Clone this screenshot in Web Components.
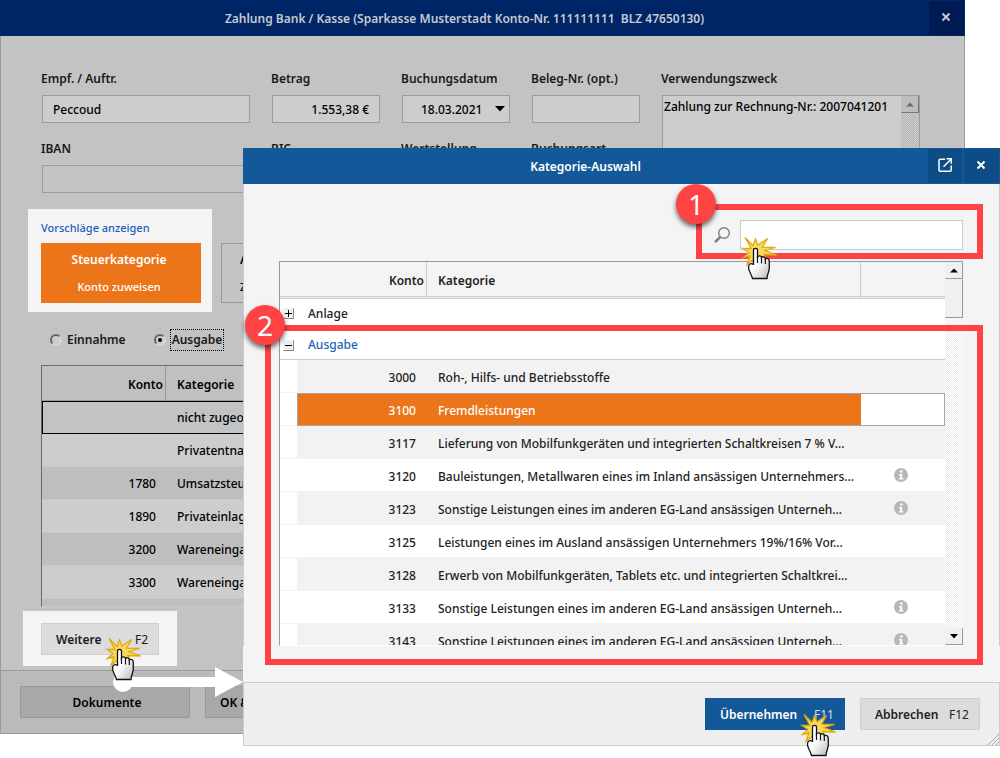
<!DOCTYPE html>
<html lang="de">
<head>
<meta charset="utf-8">
<title>Zahlung Bank / Kasse</title>
<style>
  body { margin: 0; background: #fff; font: 500 12px/20px "Noto Sans", "Open Sans", sans-serif; color: #222; }
</style>
</head>
<body>
<payment-desk></payment-desk>

<script>
/* Shared by every shadow root */
const base = `
  *, *::before, *::after { box-sizing: border-box; }
  button, input, textarea { font: inherit; color: inherit; margin: 0; border-radius: 0; }
`;

function define(name, css, html) {
  customElements.define(name, class extends HTMLElement {
    connectedCallback() {
      if (this.shadowRoot) return;
      const root = this.attachShadow({ mode: 'open' });
      const markup = typeof html === 'function' ? html(this) : html;
      root.innerHTML = `<style>${base}${css}</style>${markup}`;
    }
  });
}

/* Window frame: title bar, body and footer */
define('app-window', `
  :host { display: block; background: var(--body); }
  header { display: flex; height: 36px; background: var(--bar); color: var(--bar-text); font-weight: 600; }
  h1 { flex: 1; margin: 0; font: inherit; line-height: 37px; text-align: center; white-space: pre; }
  button { width: 36px; height: 35px; margin-top: 1px; padding: 0 1px 2px 0; border: 0; border-right: 2px solid var(--bar); border-bottom: 1px solid var(--bar);
    background: var(--bar-button); color: inherit; display: grid; place-items: center; }
  button:last-child { border-right-width: 1px; }
  main { border: 1px solid var(--edge); border-top: 0; border-bottom: 0; }
  footer { display: flex; gap: 15px; padding: 15px 19px; border: 1px solid var(--edge); background: var(--foot); }
`, el => `
  <header><h1>${el.getAttribute('heading')}</h1>
    ${el.hasAttribute('popout') ? `<button aria-label="In neuem Fenster"><svg width="16" height="16" viewBox="0 0 16 16" fill="none" stroke="currentColor" stroke-width="1.5"><path d="M8 2.2H3.2Q2 2.2 2 3.4V13q0 1.2 1.2 1.2H13q1.200 0 1.200-1.200V8.500M6.500 9.700 13.500 2.700M9.500 1.800H14.300V6.700"/></svg></button>` : ''}
    <button aria-label="Schließen"><svg width="12" height="12" viewBox="0 0 12 12" stroke="currentColor" stroke-width="2"><path d="M2.500 2.500 9.500 9.500M9.500 2.500 2.500 9.500"/></svg></button>
  </header>
  <main><slot></slot></main>
  <footer><slot name="footer"></slot></footer>
`);

/* Labelled form control */
define('form-field', `
  :host { display: block; }
  label { display: block; padding-top: 1px; margin-bottom: 6px; font-weight: 600; white-space: nowrap; }
  .box { display: flex; align-items: center; height: 28px; margin: 0 1px; border: 1px solid #9b9b9b; background: #cdcdcd; color: #000; }
  .tall { height: 98px; align-items: stretch; }
  .off { background: #c2c3c5; }
  input { flex: 1; min-width: 0; width: 0; height: 100%; padding: 0 10px; border: 0; background: none; }
  .end input { text-align: right; }
  .date input { padding: 0 0 0 18px; }
  .date svg { margin-right: 4px; }
  textarea { flex: 1; min-width: 0; padding: 1px; border: 0; background: none; resize: none; overflow: hidden; white-space: pre; }
`, el => {
  const kind = el.getAttribute('kind') || '', value = el.getAttribute('value') || '';
  const control = kind === 'tall'
    ? `<textarea id="c">${value}</textarea><scroll-rail dim></scroll-rail>`
    : `<input id="c" value="${value}">` + (kind === 'date' ? '<svg width="10" height="6"><path d="M0 0H10L5 5.500Z"/></svg>' : '');
  return `<label for="c">${el.getAttribute('label')}</label><div class="box ${kind}">${control}</div>`;
});

/* Classic scroll bar */
define('scroll-rail', `
  :host { display: flex; flex-direction: column; width: 18px; color: #000; --face: #f0f0f0; --lo: #999;
    background: repeating-conic-gradient(#fff 0 25%, #ededed 0 50%) 0 0 / 2px 2px; }
  :host([dim]) { color: #6d6d6d; --face: #bdbdbd; --lo: #777;
    background: repeating-conic-gradient(#cacaca 0 25%, #b8b8b8 0 50%) 0 0 / 2px 2px; }
  button { display: grid; place-items: center; height: 17px; padding: 0; background: var(--face);
    border: 1px solid var(--face); border-right-color: var(--lo); border-bottom-color: var(--lo); }
  .thumb { height: 39px; background: var(--face); border: 1px solid var(--face); border-right-color: var(--lo); border-bottom-color: var(--lo); }
  .space { flex: 1; }
`, el => `
  <button aria-label="Nach oben"><svg width="8" height="5" fill="currentColor"><path d="M0 4.500H8L4 .5Z"/></svg></button>
  ${el.hasAttribute('dim') ? '' : '<div class="thumb"></div>'}
  <div class="space"></div>
  ${el.hasAttribute('dim') ? '' : '<button aria-label="Nach unten"><svg width="8" height="5" fill="currentColor"><path d="M0 0H8L4 4.500Z"/></svg></button>'}
`);

/* Push button with optional function key */
define('key-button', `
  :host { display: block; position: relative; }
  button { display: flex; justify-content: center; align-items: center; width: 100%; height: 32px; padding: 1px 10px 0 14px;
    border: 1px solid #cfcfcf; background: #dcdcdc; font-weight: 600; white-space: nowrap; overflow: hidden; }
  button.keyed { justify-content: space-between; }
  kbd { font: inherit; font-weight: 400; }
  :host([tone=primary]) button { background: #135899; border-color: #135899; color: #fff; }
  :host([tone=primary]) kbd { color: #cfdeeb; }
  :host([tone=dim]) button { background: #a8a8a8; border-color: #999; color: #000; }
  :host([cut]) button { justify-content: flex-start; }
`, el => `<button class="${el.getAttribute('key') ? 'keyed' : ''}"><span><slot></slot></span>${el.getAttribute('key') ? `<kbd>${el.getAttribute('key')}</kbd>` : ''}</button><slot name="over"></slot>`);

/* Two-line suggestion tile */
define('suggest-tile', `
  :host { display: block; }
  button { display: flex; flex-direction: column; justify-content: center; gap: 7px; width: 100%; height: 60px; padding: 0 0 0 18px;
    border: 1px solid #999; background: #c4c4c4; color: #000; text-align: left; line-height: 20px; }
  strong { font-weight: 600; }
  :host([active]) button { padding: 0 4px 0 0; align-items: center; background: #ec751a; border-color: #ec751a; color: #fff; }
  span { font-size: 11px; }
`, '<button><strong><slot></slot></strong><span><slot name="sub"></slot></span></button>');

/* Radio pair */
define('booking-kind', `
  :host { display: flex; gap: 28px; padding-left: 9px; font-weight: 600; line-height: 20px; }
  div { display: flex; align-items: center; gap: 5px; }
  input { appearance: none; width: 12px; height: 12px; border-radius: 50%; background: #cdcdcd; display: grid; place-items: center;
    border: 2px solid; border-color: #666 #d6d6d6 #d6d6d6 #666; }
  input:checked::before { content: ""; width: 4px; height: 4px; border-radius: 50%; background: #000; }
  .focus { outline: 1px dotted #000; padding: 0 1px; }
`, `
  <div><input type="radio" name="k" id="in"><label for="in">Einnahme</label></div>
  <div><input type="radio" name="k" id="out" checked><label for="out" class="focus">Ausgabe</label></div>
`);

/* Short table of proposed accounts */
const proposals = [['', 'nicht zugeordnet'], ['', 'Privatentnahmen'], ['1780', 'Umsatzsteuer'], ['1890', 'Privateinlagen'], ['3200', 'Wareneingang'], ['3300', 'Wareneingang'], ['', '']];
define('proposal-table', `
  :host { display: block; height: 242px; overflow: hidden; border: 1px solid #c9c9c9; border-top-color: #6b6b6b; border-left-color: #6b6b6b; color: #000; }
  table { width: 100%; table-layout: fixed; border-collapse: separate; border-spacing: 0; }
  th, td { padding: 1px 11px 0; text-align: left; font-weight: 500; overflow: hidden; white-space: nowrap; }
  th { height: 35px; padding-top: 3px; font-weight: 600; border-bottom: 1px solid #999; background: #c0c0c0; }
  th:first-child { width: 124px; padding-right: 2px; text-align: right; border-right: 1px solid #999; }
  td { height: 33px; background: #cdcdcd; border-bottom: 1px solid #c8c8c8; }
  td:first-child { text-align: right; padding-right: 10px; }
  tbody tr:nth-child(odd) td { background: #bebebe; }
  tbody tr:first-child td { background: #c2c3c5; border: 1px solid #000; border-width: 1px 0; }
  tbody tr:first-child td:first-child { border-left-width: 1px; }
`, `<table><thead><tr><th>Konto</th><th>Kategorie</th></tr></thead><tbody>${
  proposals.map(([n, t]) => `<tr><td>${n}</td><td>${t}</td></tr>`).join('')}</tbody></table>`);

/* Category tree table */
const accounts = [
  ['3000', 'Roh-, Hilfs- und Betriebsstoffe'],
  ['3100', 'Fremdleistungen', 0, 1],
  ['3117', 'Lieferung von Mobilfunkgeräten und integrierten Schaltkreisen 7 % V...'],
  ['3120', 'Bauleistungen, Metallwaren eines im Inland ansässigen Unternehmers...', 1],
  ['3123', 'Sonstige Leistungen eines im anderen EG-Land ansässigen Unterneh...', 1],
  ['3125', 'Leistungen eines im Ausland ansässigen Unternehmers 19%/16% Vor...'],
  ['3128', 'Erwerb von Mobilfunkgeräten, Tablets etc. und integrierten Schaltkrei...'],
  ['3133', 'Sonstige Leistungen eines im anderen EG-Land ansässigen Unterneh...', 1],
  ['3143', 'Sonstige Leistungen eines im anderen EG-Land ansässigen Unterneh...', 1]];
const info = '<svg width="14" height="14" viewBox="0 0 14 14" role="img" aria-label="Info"><circle cx="7" cy="7" r="7" fill="#b7b7b7"/><circle cx="7.300" cy="3.500" r="1.300" fill="#fff"/><path d="M5 6H8.200V10.200H9.400V11.500H4.900V10.200H6.100V7.200H5Z" fill="#fff"/></svg>';
define('category-table', `
  :host { display: block; position: relative; margin: 2px 36px 36px 35px; }
  .view { display: flex; height: 385px; overflow: hidden; border: 1px solid #999; border-right: 0; border-bottom-color: #fff; }
  .rows { flex: 1; min-width: 0; background: #fff; }
  scroll-rail { flex: none; }
  table { width: 100%; table-layout: fixed; border-collapse: separate; border-spacing: 0; }
  th, td { padding: 3px 11px 0; text-align: left; font-weight: 500; white-space: nowrap; }
  th { height: 37px; font-weight: 600; background: #f4f4f4; border-bottom: 3px double #ccc; }
  th.n { width: 130px; padding-right: 2px; text-align: right; border-right: 1px solid #ccc; }
  th.t { border-right: 1px solid #ccc; }
  th.tree { width: 17px; padding: 0; }
  th.i { width: 84px; }
  .group td { padding: 0 0 0 3px; }
  .group.closed td { height: 29px; }
  .group.open td { height: 32px; padding-top: 3px; border-bottom: 1px solid #ccc; color: #1c5fb8; }
  .group div { display: flex; align-items: center; gap: 14px; }
  .group button { width: 11px; height: 11px; padding: 0; display: grid; place-items: center; background: #f0f0f0; border: 1px solid #f0f0f0; border-right-color: #888; border-bottom-color: #888; }
  .item td { height: 33px; border-bottom: 1px solid #f4f4f4; }
  .item td.n { text-align: right; padding-right: 11px; }
  .item td.i { padding: 0 5px 0 0; }
  .item td.i svg { display: block; margin: 0 auto; }
  .item.odd td:not(.tree) { background: #f2f2f2; }
  .item.sel td:not(.tree) { background: #ec751a; color: #fff; border: 1px solid #a5a5a5; border-width: 1px 0; }
  .item.sel td.n { border-left-width: 1px; }
  .item.sel td.i { background: #fff; border-right-width: 1px; }
  mark-frame { position: absolute; top: 64px; right: -20px; bottom: -19px; left: -14px; pointer-events: none; }
`, `
  <div class="view"><div class="rows"><table>
    <thead><tr><th class="tree"></th><th class="n">Konto</th><th class="t">Kategorie</th><th class="i"></th></tr></thead>
    <tbody>
      <tr class="group closed"><td colspan="4"><div><button aria-label="Öffnen"><svg width="7" height="7" stroke="#000"><path d="M0 3.500H7M3.500 0V7"/></svg></button>Anlage</div></td></tr>
      <tr class="group open"><td colspan="4"><div><button aria-label="Schließen"><svg width="7" height="7" stroke="#000"><path d="M0 3.500H7"/></svg></button>Ausgabe</div></td></tr>
      ${accounts.map(([n, t, i, s], k) => `<tr class="item ${s ? 'sel' : k % 2 ? '' : 'odd'}"><td class="tree"></td><td class="n">${n}</td><td class="t">${t}</td><td class="i">${i ? info : ''}</td></tr>`).join('')}
    </tbody></table></div><scroll-rail></scroll-rail></div>
  <mark-frame number="2"></mark-frame>
`);

/* Red frame with a numbered badge on its corner */
define('mark-frame', `
  :host { display: block; position: relative; border: 6px solid #ff4344; }
  b { position: absolute; left: -26px; top: -26px; width: 40px; height: 40px; border-radius: 50%; background: #ff4344; color: #fff;
    font-size: 28px; font-weight: 400; line-height: 41px; text-align: center; box-shadow: 0 3px 5px rgba(0,0,0,.6); }
`, el => `<slot></slot><b>${el.getAttribute('number')}</b>`);

/* Search row */
define('category-search', `
  :host { display: flex; justify-content: flex-end; padding: 20px 16px 0 0; position: relative; z-index: 2; }
  .row { display: flex; align-items: center; gap: 10px; padding: 10px 14px 3px 12px; }
  input { width: 223px; height: 30px; padding: 0 10px; border: 1px solid #ccc; background: #fff; }
  click-hand { position: absolute; left: 34px; top: 20px; }
`, `
  <mark-frame number="1"><div class="row">
    <svg width="16" height="16" viewBox="0 0 16 16" fill="none" stroke="#808080"><circle cx="10" cy="6" r="5.300" stroke-width="1.400"/><path d="M6.200 10 1 15.200" stroke-width="2.600"/></svg>
    <input type="search" aria-label="Kategorie suchen">
  </div><click-hand></click-hand></mark-frame>
`);

/* Pointing hand with click burst */
define('click-hand', `
  :host { display: block; width: 44px; height: 52px; pointer-events: none; }
  svg { display: block; }
`, `
  <svg width="44" height="52" viewBox="0 0 44 52">
    <defs><linearGradient id="g" x1="0" y1="0" x2="1" y2="1"><stop offset=".45" stop-color="#fff"/><stop offset="1" stop-color="#bbb"/></linearGradient></defs>
    <path d="M9 7.500 17 15.500 19.500 9 22 15 31.500 8.500 26.500 17.200 39.500 17.500 29 20.500 40.500 25 28 24.500 30 29 20 27 11 34.500 14 26 7.500 27.500 13 22.500 7 18.500 15 18.500Z" fill="#f9d95d" stroke="#e3a90c" stroke-width="1.300" stroke-linejoin="miter"/>
    <path d="M17.500 35V20.200C17.500 17.800 21.500 17.800 21.500 20.200V27C22.500 25.200 25.300 25.500 25.500 27.500 26.500 26.200 29 26.500 29.300 28.700 31.500 27.700 33.300 29 33.300 31.500V38C33.300 42 31 44 31 48.500H16.500C15.500 44 12.700 42 12.500 37.500 12.300 34 15 32.500 17.500 34.500Z" fill="url(#g)" stroke="#111" stroke-width="1.300"/>
    <path d="M21.500 26V33M25.500 27V33.500M29.300 28.500V34" stroke="#111" stroke-width="1.200"/>
  </svg>
`);

/* Arrow from the button to the dialog */
define('flow-arrow', `:host { display: block; } svg { display: block; }`,
  '<svg width="130" height="30" fill="#fff"><circle cx="10" cy="15" r="10"/><path d="M10 10H102V0L130 15 102 30V20H10Z"/></svg>');

/* Bright panel that stands out of the dimmed window */
define('spot-light', `:host { display: block; position: relative; z-index: 1; background: #f4f4f4; }`, '<slot></slot>');

/* The two windows */
define('payment-desk', `
  :host { display: block; position: relative; min-height: 757px; overflow: hidden; }
  .payment { position: absolute; left: 0; right: 35px; top: 0; z-index: 0; color: #1a1a1a;
    --bar: #002566; --bar-text: #c6c9ce; --bar-button: #001a53; --body: #c3c3c3; --foot: #bababa; --edge: #9a9a9a; }
  .dialog { position: absolute; left: 243px; right: 0; top: 148px; z-index: 1;
    --bar: #135899; --bar-text: #fff; --bar-button: #0d4c86; --body: #f4f4f4; --foot: #eee; --edge: #ccc; }
  .content { padding: 32px 43px 4px 40px; }
  .fields { display: grid; grid-template-columns: 210px 110px 110px 110px 1fr; gap: 15px 20px; }
  .fields .wide { grid-row: span 2; }
  .suggest { display: flex; align-items: flex-end; margin-top: 16px; }
  .suggest spot-light { width: 184px; margin-left: -13px; padding: 9px 11px 9px 13px; }
  .suggest > suggest-tile { flex: 0 1 160px; margin: 0 0 9px 9px; }
  a { display: block; margin-bottom: 5px; color: #1c5fb8; font-size: 11px; text-decoration: none; }
  booking-kind { margin-top: 18px; }
  proposal-table { margin-top: 15px; }
  .more { width: 154px; margin: 4px 0 0 -18px; padding: 12px 18px 11px; }
  .more flow-arrow { position: absolute; left: 90px; top: 56px; }
  .more click-hand { position: absolute; left: 77px; top: 20px; }
  .docs { width: 170px; }
  .ok { width: 120px; }
  .take { width: 140px; margin-left: auto; }
  .take click-hand { position: absolute; left: 90px; top: 9px; }
  .cancel { width: 120px; }
  .grip { position: absolute; right: 1px; bottom: 1px; display: block; }
`, `
  <app-window class="payment" heading="Zahlung Bank / Kasse (Sparkasse Musterstadt Konto-Nr. 111111111  BLZ 47650130)">
    <div class="content">
      <div class="fields">
        <form-field label="Empf. / Auftr." value="Peccoud"></form-field>
        <form-field label="Betrag" kind="end" value="1.553,38 €"></form-field>
        <form-field label="Buchungsdatum" kind="date" value="18.03.2021"></form-field>
        <form-field label="Beleg-Nr. (opt.)"></form-field>
        <form-field class="wide" label="Verwendungszweck" kind="tall" value="Zahlung zur Rechnung-Nr.: 2007041201"></form-field>
        <form-field label="IBAN" kind="off"></form-field>
        <form-field label="BIC" kind="off"></form-field>
        <form-field label="Wertstellung" kind="date"></form-field>
        <form-field label="Buchungsart"></form-field>
      </div>
      <div class="suggest">
        <spot-light><a href="#">Vorschläge anzeigen</a><suggest-tile active>Steuerkategorie<span slot="sub">Konto zuweisen</span></suggest-tile></spot-light>
        <suggest-tile>A<span slot="sub">Z</span></suggest-tile>
      </div>
      <booking-kind></booking-kind>
      <proposal-table></proposal-table>
      <spot-light class="more"><key-button key="F2">Weitere</key-button><flow-arrow></flow-arrow><click-hand></click-hand></spot-light>
    </div>
    <key-button slot="footer" class="docs" tone="dim">Dokumente</key-button>
    <key-button slot="footer" class="ok" tone="dim" cut>OK &amp;</key-button>
  </app-window>

  <app-window class="dialog" heading="Kategorie-Auswahl" popout>
    <category-search></category-search>
    <category-table></category-table>
    <key-button slot="footer" class="take" tone="primary" key="F11">Übernehmen<click-hand slot="over"></click-hand></key-button>
    <key-button slot="footer" class="cancel" key="F12">Abbrechen</key-button>
    <svg slot="footer" class="grip" width="11" height="11" stroke="#aaa"><path d="M0 11 11 0M4 11 11 4M8 11 11 8"/></svg>
  </app-window>
`);
</script>
</body>
</html>
